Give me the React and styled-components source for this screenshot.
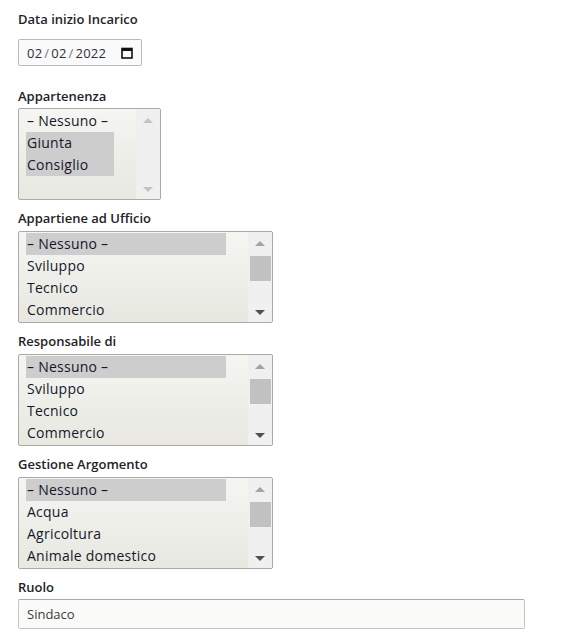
import React from 'react';
import styled, { createGlobalStyle } from 'styled-components';

const GlobalStyle = createGlobalStyle`
  body {
    margin: 0;
    background: #fff;
    font-family: "Open Sans", "Noto Sans", sans-serif;
    color: #222;
  }
`;

const Form = styled.div`
  padding: 10px 18px 12px 18px;
`;

const Field = styled.div`
  margin-bottom: ${p => p.$gap || 9}px;
`;

const Label = styled.div`
  font-size: 13px;
  font-weight: 600;
  line-height: 18px;
  color: #1f2329;
  margin-bottom: ${p => p.$gap || 4}px;
`;

const DateBox = styled.div`
  box-sizing: border-box;
  width: 124px;
  height: 27px;
  margin-top: 11px;
  border: 1px solid #b9b9b9;
  border-radius: 2px;
  background: #fafafa;
  display: flex;
  align-items: center;
  padding: 0 8px 0 8px;
  font-size: 13px;
  color: #2a2f3a;
  letter-spacing: 0.2px;
`;

const DateText = styled.span`
  flex: 1;
`;

const Slash = styled.span`
  color: #777;
  margin: 0 2px;
`;

const ListBox = styled.div`
  box-sizing: border-box;
  width: ${p => p.$width}px;
  height: 92px;
  border: 1px solid #a9a9a9;
  border-radius: 2px;
  display: flex;
  background: linear-gradient(#f5f5f2, #e8e8e1);
  overflow: hidden;
`;

const Options = styled.div`
  flex: 1;
  padding: 1px 22px 0 7px;
`;

const Option = styled.div`
  height: 22px;
  line-height: 22px;
  font-size: 14px;
  letter-spacing: 0.25px;
  padding-left: 1px;
  color: #14182a;
  white-space: nowrap;
  background: ${p => (p.$selected ? '#cdcdcd' : 'transparent')};
`;

const Scrollbar = styled.div`
  width: 24px;
  background: #f0f0f0;
  display: flex;
  flex-direction: column;
  align-items: center;
`;

const Arrow = styled.div`
  width: 0;
  height: 0;
  margin: ${p => (p.$down ? '0 0 7px' : '9px 0 0')};
  border-left: 5px solid transparent;
  border-right: 5px solid transparent;
  ${p => (p.$down ? 'border-top' : 'border-bottom')}: 5px solid ${p => p.$color};
`;

const Track = styled.div`
  flex: 1;
  width: 100%;
  display: flex;
  flex-direction: column;
  align-items: center;
  padding-top: 10px;
`;

const Thumb = styled.div`
  width: 21px;
  height: 25px;
  background: #c1c1c1;
`;

const TextInput = styled.div`
  box-sizing: border-box;
  width: 507px;
  height: 30px;
  border: 1px solid #c4c4c4;
  border-top-color: #a9a9a9;
  border-radius: 2px;
  background: #fafaf9;
  padding: 0 8px;
  line-height: 28px;
  font-size: 13px;
  color: #3a3a3a;
`;

const CalendarIcon = () => (
  <svg width="12" height="12" viewBox="0 0 12 12">
    <rect x="1" y="1.5" width="10" height="9.5" fill="none" stroke="#111" strokeWidth="1.6" />
    <rect x="1" y="1.5" width="10" height="2.5" fill="#111" />
  </svg>
);

const Select = ({ width, items, selected = [], scroll }) => (
  <ListBox $width={width}>
    <Options>
      {items.map((it, i) => (
        <Option key={it} $selected={selected.includes(i)}>{it}</Option>
      ))}
    </Options>
    <Scrollbar>
      <Arrow $color={scroll ? '#a3a3a3' : '#c4c4c4'} />
      <Track>{scroll && <Thumb />}</Track>
      <Arrow $down $color={scroll ? '#505050' : '#c4c4c4'} />
    </Scrollbar>
  </ListBox>
);

export default function App() {
  return (
    <Form>
      <GlobalStyle />
      <Field $gap={21}>
        <Label>Data inizio Incarico</Label>
        <DateBox>
          <DateText>
            02<Slash>/</Slash>02<Slash>/</Slash>2022
          </DateText>
          <CalendarIcon />
        </DateBox>
      </Field>
      <Field>
        <Label $gap={3}>Appartenenza</Label>
        <Select width={143} items={['– Nessuno –', 'Giunta', 'Consiglio']} selected={[1, 2]} />
      </Field>
      <Field>
        <Label>Appartiene ad Ufficio</Label>
        <Select width={255} items={['– Nessuno –', 'Sviluppo', 'Tecnico', 'Commercio']} selected={[0]} scroll />
      </Field>
      <Field>
        <Label>Responsabile di</Label>
        <Select width={255} items={['– Nessuno –', 'Sviluppo', 'Tecnico', 'Commercio']} selected={[0]} scroll />
      </Field>
      <Field>
        <Label>Gestione Argomento</Label>
        <Select width={255} items={['– Nessuno –', 'Acqua', 'Agricoltura', 'Animale domestico']} selected={[0]} scroll />
      </Field>
      <Field>
        <Label $gap={3}>Ruolo</Label>
        <TextInput>Sindaco</TextInput>
      </Field>
    </Form>
  );
}
